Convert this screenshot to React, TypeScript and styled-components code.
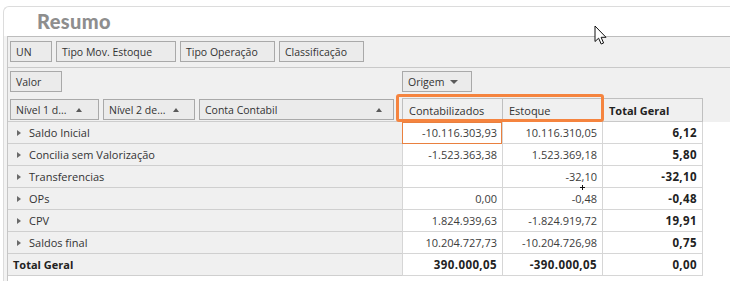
import React from "react";
import styled, { createGlobalStyle } from "styled-components";

const GlobalStyle = createGlobalStyle`
  html, body {
    margin: 0;
    padding: 0;
    height: 100%;
    background: #fff;
    overflow: hidden;
  }
  body {
    font-family: "Open Sans", "Noto Sans", sans-serif;
    color: #333;
  }
  #root {
    height: 100%;
  }
`;

const COLS = "394px 100px 100px 101px 1fr";

type Row = { label: string; c: string; e: string; t: string };

const rows: Row[] = [
  { label: "Saldo Inicial", c: "-10.116.303,93", e: "10.116.310,05", t: "6,12" },
  { label: "Concilia sem Valorização", c: "-1.523.363,38", e: "1.523.369,18", t: "5,80" },
  { label: "Transferencias", c: "", e: "-32,10", t: "-32,10" },
  { label: "OPs", c: "0,00", e: "-0,48", t: "-0,48" },
  { label: "CPV", c: "1.824.939,63", e: "-1.824.919,72", t: "19,91" },
  { label: "Saldos final", c: "10.204.727,73", e: "-10.204.726,98", t: "0,75" },
];

const Screen = styled.div`
  position: relative;
  height: 100%;
  padding: 6px 0 0 3px;
  box-sizing: border-box;
  display: flex;
`;

const Card = styled.div`
  flex: 1;
  display: flex;
  flex-direction: column;
  border-top: 1px solid #dcdcdc;
  border-left: 1px solid #dcdcdc;
  border-top-left-radius: 6px;
  background: #fff;
`;

const Title = styled.h1`
  margin: 0;
  height: 29px;
  padding-left: 33px;
  font-family: Lato, "Open Sans", sans-serif;
  font-weight: 900;
  font-size: 20px;
  letter-spacing: 0.4px;
  line-height: 29px;
  color: #8e8e8e;
`;

const Body = styled.div`
  flex: 1;
  display: flex;
  padding-left: 3px;
  background: #f3f3f3;
`;

const Panel = styled.div`
  flex: 1;
  display: flex;
  flex-direction: column;
  border-top: 1px solid #bdbdbd;
  border-left: 1px solid #c6c6c6;
  background: #f0f0f0;
`;

const FilterBar = styled.div`
  display: flex;
  gap: 4px;
  height: 31px;
  padding: 4px 0 0 2px;
  box-sizing: border-box;
  border-bottom: 1px solid #c9c9c9;
`;

const DataBar = styled.div`
  display: grid;
  grid-template-columns: ${COLS};
  height: 30px;
  padding-top: 3px;
  box-sizing: border-box;
`;

const BarSlot = styled.div`
  display: flex;
  gap: 4px;
  padding-left: 2px;
`;

const FieldButton = styled.div<{ $w: number; $pr?: number }>`
  width: ${(p) => p.$w}px;
  height: 21px;
  box-sizing: border-box;
  display: flex;
  align-items: center;
  justify-content: space-between;
  gap: 6px;
  padding: 0 ${(p) => p.$pr ?? 4}px 0 5px;
  border: 1px solid #a9a9a9;
  background: #ebebeb;
  font-size: 10.5px;
  color: #333;
  white-space: nowrap;
`;

const DropButton = styled(FieldButton)`
  justify-content: flex-start;
`;

const Arrow = styled.span<{ $dir: "up" | "down" | "right" }>`
  flex: none;
  width: 0;
  height: 0;
  ${(p) =>
    p.$dir === "up"
      ? "border-left: 3.5px solid transparent; border-right: 3.5px solid transparent; border-bottom: 4px solid #5a5a5a;"
      : p.$dir === "down"
      ? "border-left: 4px solid transparent; border-right: 4px solid transparent; border-top: 4px solid #5a5a5a;"
      : "border-top: 3px solid transparent; border-bottom: 3px solid transparent; border-left: 4px solid #6a6a6a;"}
`;

const Pivot = styled.div`
  flex: 1;
  background: #fff;
`;

const GridRow = styled.div<{ $h: number }>`
  display: grid;
  grid-template-columns: ${COLS};
  height: ${(p) => p.$h}px;
`;

const HeadLabels = styled.div`
  display: flex;
  gap: 4px;
  padding: 1px 0 0 2px;
  background: #f0f0f0;
  border-bottom: 1px solid #cdcdcd;
`;

const ColHead = styled.div<{ $bold?: boolean; $last?: boolean }>`
  position: relative;
  display: flex;
  align-items: center;
  padding-left: 6px;
  background: #f0f0f0;
  border-top: 1px solid #bfbfbf;
  border-left: 1px solid #bfbfbf;
  border-bottom: 1px solid #c9c9c9;
  ${(p) => (p.$last ? "border-right: 1px solid #bfbfbf;" : "")}
  font-size: 11px;
  font-weight: ${(p) => (p.$bold ? 700 : 400)};
  color: ${(p) => (p.$bold ? "#222" : "#333")};
`;

const HeadFill = styled.div`
  background: #f0f0f0;
`;

const Highlight = styled.div`
  position: absolute;
  z-index: 2;
  left: -7px;
  top: -5px;
  width: 208px;
  height: 28px;
  box-sizing: border-box;
  border: 3px solid #f5843f;
  border-radius: 3px;
  pointer-events: none;
`;

const LabelCell = styled.div<{ $total?: boolean }>`
  display: flex;
  align-items: center;
  gap: 8px;
  padding-left: ${(p) => (p.$total ? 5 : 9)}px;
  background: #f0f0f0;
  border-bottom: 1px solid #cfcfcf;
  font-size: 11px;
  font-weight: ${(p) => (p.$total ? 700 : 400)};
  color: ${(p) => (p.$total ? "#222" : "#333")};
`;

const ValueCell = styled.div<{ $bold?: boolean; $last?: boolean; $selected?: boolean }>`
  padding-right: 5px;
  text-align: right;
  line-height: 21px;
  background: #fff;
  border-left: 1px solid #d6d6d6;
  border-bottom: 1px solid #d6d6d6;
  ${(p) => (p.$last ? "border-right: 1px solid #d6d6d6;" : "")}
  ${(p) => (p.$selected ? "outline: 1px solid #e9803f; outline-offset: -1px;" : "")}
  font-size: ${(p) => (p.$bold ? 11.5 : 11)}px;
  font-weight: ${(p) => (p.$bold ? 700 : 400)};
  letter-spacing: ${(p) => (p.$bold ? 0.4 : 0)}px;
  color: ${(p) => (p.$bold ? "#222" : "#3c3c3c")};
  white-space: nowrap;
`;

const Cursor = styled.svg`
  position: absolute;
  left: 594px;
  top: 25px;
`;

const Crosshair = styled.svg`
  position: absolute;
  left: 580px;
  top: 185px;
`;

export default function App() {
  return (
    <>
      <GlobalStyle />
      <Screen>
        <Card>
          <Title>Resumo</Title>
          <Body>
            <Panel>
              <FilterBar>
                <FieldButton $w={42}>UN</FieldButton>
                <FieldButton $w={120}>Tipo Mov. Estoque</FieldButton>
                <FieldButton $w={95}>Tipo Operação</FieldButton>
                <FieldButton $w={85}>Classificação</FieldButton>
              </FilterBar>
              <DataBar>
                <BarSlot>
                  <FieldButton $w={52}>Valor</FieldButton>
                </BarSlot>
                <div>
                  <DropButton $w={70}>
                    Origem <Arrow $dir="down" />
                  </DropButton>
                </div>
              </DataBar>
              <Pivot>
                <GridRow $h={24}>
                  <HeadLabels>
                    <FieldButton $w={89} $pr={16}>
                      Nível 1 d... <Arrow $dir="up" />
                    </FieldButton>
                    <FieldButton $w={92} $pr={15}>
                      Nível 2 de... <Arrow $dir="up" />
                    </FieldButton>
                    <FieldButton $w={195} $pr={11}>
                      Conta Contabil <Arrow $dir="up" />
                    </FieldButton>
                  </HeadLabels>
                  <ColHead>
                    Contabilizados
                    <Highlight />
                  </ColHead>
                  <ColHead>Estoque</ColHead>
                  <ColHead $bold $last>
                    Total Geral
                  </ColHead>
                  <HeadFill />
                </GridRow>
                {rows.map((r, i) => (
                  <GridRow $h={22} key={r.label}>
                    <LabelCell>
                      <Arrow $dir="right" />
                      {r.label}
                    </LabelCell>
                    <ValueCell $selected={i === 0}>{r.c}</ValueCell>
                    <ValueCell>{r.e}</ValueCell>
                    <ValueCell $bold $last>
                      {r.t}
                    </ValueCell>
                    <div />
                  </GridRow>
                ))}
                <GridRow $h={22}>
                  <LabelCell $total>Total Geral</LabelCell>
                  <ValueCell $bold>390.000,05</ValueCell>
                  <ValueCell $bold>-390.000,05</ValueCell>
                  <ValueCell $bold $last>
                    0,00
                  </ValueCell>
                  <div />
                </GridRow>
              </Pivot>
            </Panel>
          </Body>
        </Card>
        <Cursor width="14" height="21" viewBox="0 0 14 21">
          <path
            d="M1 1 L1 16.5 L4.6 13.2 L7.2 19 L9.6 18 L7.1 12.3 L12 12.3 Z"
            fill="#fff"
            stroke="#111"
            strokeWidth="1"
            strokeLinejoin="round"
          />
        </Cursor>
        <Crosshair width="5" height="5" viewBox="0 0 5 5">
          <path d="M2.5 0 V5 M0 2.5 H5" stroke="#111" strokeWidth="1" />
        </Crosshair>
      </Screen>
    </>
  );
}
